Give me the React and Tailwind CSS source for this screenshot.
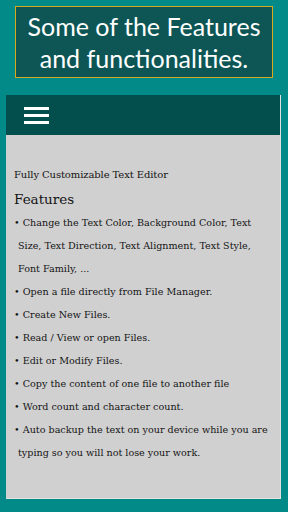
import React from 'react';

const features = [
  ['Change the Text Color, Background Color, Text', 'Size, Text Direction, Text Alignment, Text Style,', 'Font Family, ...'],
  ['Open a file directly from File Manager.'],
  ['Create New Files.'],
  ['Read / View  or open Files.'],
  ['Edit or Modify Files.'],
  ['Copy the content of one file to another file'],
  ['Word count and character count.'],
  ['Auto backup the text on your device while you are', 'typing so you will not lose your work.'],
];

const App = () => {
  return (
    <div className="w-[288px] h-[512px] bg-[#028a88] overflow-hidden flex flex-col">
      <div className="mx-[15px] mt-[6px] h-[72px] border border-[#d6a91e] bg-[#0d5655] flex flex-col items-center justify-center text-white text-[25px] leading-[32px] font-['Lato',sans-serif]">
        <div>Some of the Features</div>
        <div>and functionalities.</div>
      </div>

      <div className="mx-[6px] mt-[17px] w-[275px] h-[404px] flex flex-col bg-[#d0d0d0] border-r border-b border-[#e2e2e2]">
        <div className="h-[40px] bg-[#034f4e] flex flex-col justify-center gap-[4px] pl-[18px]">
          <div className="w-[25px] h-[3px] bg-white" />
          <div className="w-[25px] h-[3px] bg-white" />
          <div className="w-[25px] h-[3px] bg-white" />
        </div>
        <div className="pl-[8px] pt-[33px] text-[#141414] font-['DejaVu_Serif',serif]">
          <div className="text-[10px] leading-[14px] tracking-[-0.1px]">Fully Customizable Text Editor</div>
          <div className="text-[13.5px] leading-[18px] mt-[8px] mb-[3px]">Features</div>
          <div className="text-[9.6px] leading-[23px]">
            {features.map((lines, i) => (
              <div key={i}>
                {lines.map((line, j) => (
                  <div key={j} className={j === 0 ? '' : 'pl-[4px]'}>
                    {j === 0 ? <span>• </span> : null}
                    {line}
                  </div>
                ))}
              </div>
            ))}
          </div>
        </div>
      </div>
    </div>
  );
};

export default App;
